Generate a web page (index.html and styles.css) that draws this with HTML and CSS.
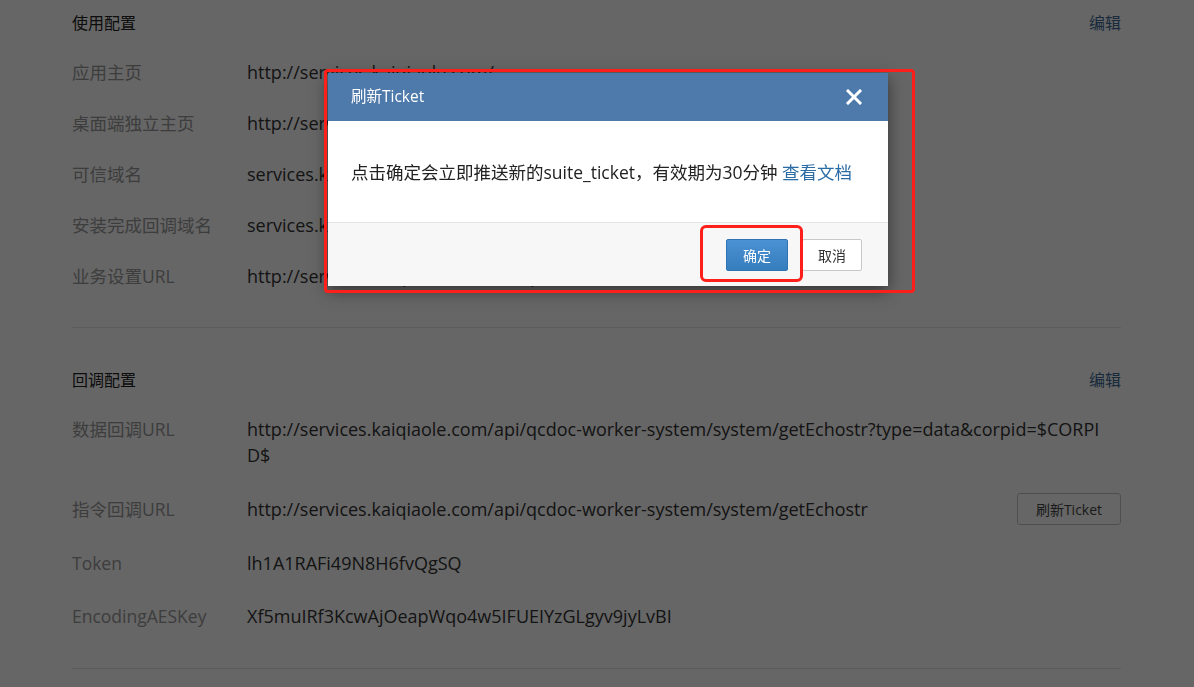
FILE: index.html
```html
<!DOCTYPE html>
<html lang="zh">
<head>
<meta charset="utf-8">
<title>刷新Ticket</title>
<link rel="stylesheet" href="styles.css">
</head>
<body>
<div class="page">
  <section class="section first">
    <div class="sec-head"><span class="sec-title">使用配置</span><a class="edit">编辑</a></div>
    <div class="row"><div class="label">应用主页</div><div class="value">http://services.kaiqiaole.com/</div></div>
    <div class="row"><div class="label">桌面端独立主页</div><div class="value">http://services.kaiqiaole.com/</div></div>
    <div class="row"><div class="label">可信域名</div><div class="value">services.kaiqiaole.com</div></div>
    <div class="row"><div class="label">安装完成回调域名</div><div class="value">services.kaiqiaole.com</div></div>
    <div class="row"><div class="label">业务设置URL</div><div class="value">http://services.kaiqiaole.com/setup</div></div>
  </section>
  <section class="section">
    <div class="sec-head"><span class="sec-title">回调配置</span><a class="edit">编辑</a></div>
    <div class="row"><div class="label">数据回调URL</div><div class="value">http://services.kaiqiaole.com/api/qcdoc-worker-system/system/getEchostr?type=data&amp;corpid=$CORPI<br>D$</div></div>
    <div class="row tall"><div class="label">指令回调URL</div><div class="value">http://services.kaiqiaole.com/api/qcdoc-worker-system/system/getEchostr</div><button class="btn-ghost">刷新Ticket</button></div>
    <div class="row loose"><div class="label">Token</div><div class="value">lh1A1RAFi49N8H6fvQgSQ</div></div>
    <div class="row loose"><div class="label">EncodingAESKey</div><div class="value">Xf5muIRf3KcwAjOeapWqo4w5IFUEIYzGLgyv9jyLvBI</div></div>
  </section>
</div>

<div class="overlay"></div>

<div class="modal">
  <div class="modal-head">
    <span class="modal-title">刷新Ticket</span>
    <svg class="close" width="16" height="16" viewBox="0 0 16 16"><path d="M2 2 L14 14 M14 2 L2 14" stroke="#fff" stroke-width="3" stroke-linecap="square"/></svg>
  </div>
  <div class="modal-body">点击确定会立即推送新的suite_ticket，有效期为30分钟 <a class="doc">查看文档</a></div>
  <div class="modal-foot">
    <button class="btn-primary">确定</button>
    <button class="btn-default">取消</button>
  </div>
</div>

<div class="mark mark-modal"></div>
<div class="mark mark-btn"></div>
</body>
</html>
```

FILE: styles.css
```css
html, body {
  margin: 0;
  padding: 0;
  background: #fff;
  height: 100%;
  overflow: hidden;
}
body {
  font-family: "Open Sans", "Noto Sans CJK SC", sans-serif;
  color: #333;
}
.page {
  padding: 0 73px 0 72px;
}
.section {
  padding: 29px 0 26px;
  border-bottom: 1px solid #e5e5e5;
}
.section.first {
  padding-top: 0;
}
.sec-head {
  height: 44px;
  margin-bottom: 2px;
  display: flex;
  justify-content: space-between;
  align-items: center;
  font-size: 16px;
}
.sec-title {
  color: #222;
}
.edit {
  color: #3d6a94;
}
.row {
  display: grid;
  grid-template-columns: 175px 1fr auto;
  align-items: start;
  padding: 12.5px 0;
  font-size: 17.5px;
  line-height: 26px;
}
.row.tall {
  align-items: center;
}
.row.loose {
  padding: 13px 0 13.5px;
}
.label {
  color: #999;
}
.value {
  color: #333;
  font-size: 18px;
  word-break: break-all;
}
.btn-ghost {
  width: 104px;
  height: 32px;
  border: 1px solid #c4c4c4;
  border-radius: 3px;
  background: #fff;
  color: #444;
  font-family: inherit;
  font-size: 14px;
  padding: 0;
}
.overlay {
  position: fixed;
  inset: 0;
  background: rgba(0, 0, 0, 0.6);
}
.modal {
  position: absolute;
  left: 328px;
  top: 73px;
  width: 560px;
  background: #fff;
  box-shadow: 0 5px 15px rgba(0, 0, 0, 0.5);
}
.modal-head {
  height: 48px;
  box-sizing: border-box;
  background: #4e79ab;
  display: flex;
  align-items: center;
  justify-content: space-between;
  padding: 0 26px 3px 23px;
}
.modal-title {
  color: #fff;
  font-size: 15.5px;
}
.close {
  display: block;
  margin-top: 3px;
}
.modal-body {
  height: 101px;
  box-sizing: border-box;
  padding: 38px 23px 0;
  font-size: 17.5px;
  line-height: 26px;
  color: #222;
}
.doc {
  color: #2b6ca5;
}
.modal-foot {
  height: 64px;
  box-sizing: border-box;
  border-top: 1px solid #e5e5e5;
  background: #f7f7f7;
  display: flex;
  justify-content: flex-end;
  align-items: center;
  gap: 14px;
  padding: 0 26px 0 0;
}
.btn-primary, .btn-default {
  height: 32px;
  font-family: inherit;
  font-size: 14px;
  border-radius: 2px;
  padding: 0;
}
.btn-primary {
  width: 62px;
  border: 1px solid #2f73b3;
  background: linear-gradient(#4a92d3, #357dbd);
  color: #fff;
}
.btn-default {
  width: 60px;
  border: 1px solid #c8c8c8;
  background: #fff;
  color: #333;
}
.mark {
  position: absolute;
  border: 3px solid #ff1f1a;
  box-sizing: border-box;
}
.mark-modal {
  left: 324px;
  top: 69px;
  width: 591px;
  height: 224px;
  border-radius: 4px;
}
.mark-btn {
  left: 700px;
  top: 225px;
  width: 103px;
  height: 57px;
  border-radius: 6px;
}
```
